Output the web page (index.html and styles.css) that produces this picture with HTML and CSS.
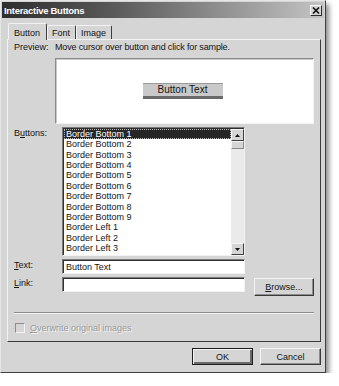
FILE: index.html
```html
<!DOCTYPE html>
<html lang="en">
  <head>
    <meta charset="UTF-8" />
    <meta name="viewport" content="width=device-width, initial-scale=1.0" />
    <link rel="stylesheet" href="styles.css">
    <title>Interactive Buttons</title>
  </head>
  <body>
    <div class="vindue">
      <div class="titel">
        <span>Interactive Buttons</span>
        <span class="luk">
          <svg width="8" height="7" viewBox="0 0 8 7"><path d="M1 0.5 L7 6.5 M7 0.5 L1 6.5" stroke="#111" stroke-width="1.6"/></svg>
        </span>
      </div>

      <nav class="faner">
        <span class="fane valgt">Button</span>
        <span class="fane">Font</span>
        <span class="fane">Image</span>
      </nav>

      <section class="panel">
        <div class="raekke">
          <span class="etiket kort">Preview:</span>
          <span class="info">Move cursor over button and click for sample.</span>
        </div>
        <div class="preview">
          <span class="eksempel">Button Text</span>
        </div>

        <div class="raekke top">
          <span class="etiket">B<u>u</u>ttons:</span>
          <div class="liste">
            <ul>
              <li class="valgt">Border Bottom 1</li>
              <li>Border Bottom 2</li>
              <li>Border Bottom 3</li>
              <li>Border Bottom 4</li>
              <li>Border Bottom 5</li>
              <li>Border Bottom 6</li>
              <li>Border Bottom 7</li>
              <li>Border Bottom 8</li>
              <li>Border Bottom 9</li>
              <li>Border Left 1</li>
              <li>Border Left 2</li>
              <li>Border Left 3</li>
            </ul>
            <div class="rulle">
              <span class="pil"><svg width="5" height="3" viewBox="0 0 5 3"><path d="M0 3 L2.5 0 L5 3 Z" fill="#111"/></svg></span>
              <span class="greb"></span>
              <span class="spor"></span>
              <span class="pil"><svg width="5" height="3" viewBox="0 0 5 3"><path d="M0 0 L2.5 3 L5 0 Z" fill="#111"/></svg></span>
            </div>
          </div>
        </div>

        <div class="raekke felt">
          <span class="etiket"><u>T</u>ext:</span>
          <span class="input">Button Text</span>
        </div>
        <div class="raekke felt">
          <span class="etiket"><u>L</u>ink:</span>
          <span class="input"></span>
          <button class="knap browse"><u>B</u>rowse...</button>
        </div>

        <hr />

        <label class="check">
          <span class="boks"></span>
          <span><u>O</u>verwrite original images</span>
        </label>
      </section>

      <footer class="knapper">
        <button class="knap standard">OK</button>
        <button class="knap">Cancel</button>
      </footer>
    </div>
  </body>
</html>
```

FILE: styles.css
```css
* {
  margin: 0;
  padding: 0;
  box-sizing: border-box;
}

body {
  background-color: white;
  font-family: "Liberation Sans", Arial, sans-serif;
  font-size: 9px;
  color: #141414;
}

u {
  text-decoration: underline;
}

.vindue {
  width: 326px;
  height: 373px;
  background-color: #d5d5d5;
  border: 1px solid;
  border-color: #e6e6e6 #404040 #404040 #e6e6e6;
  box-shadow: 3px 4px 5px rgba(0, 0, 0, 0.45);
  padding: 1px;
}

.titel {
  height: 16px;
  background: linear-gradient(to right, #2e2e2e, #5a5a5a 35%, #c4c4c4);
  color: white;
  font-weight: bold;
  font-size: 9.5px;
  letter-spacing: -0.3px;
  display: flex;
  align-items: center;
  justify-content: space-between;
  padding: 0 2px 0 2px;
}

.luk {
  width: 12px;
  height: 11px;
  background-color: #d5d5d5;
  border: 1px solid;
  border-color: #f4f4f4 #303030 #303030 #f4f4f4;
  display: flex;
  align-items: center;
  justify-content: center;
}

.faner {
  display: flex;
  align-items: flex-end;
  height: 20px;
  padding-left: 6px;
  margin-top: 1px;
}

.fane {
  height: 14px;
  padding: 2px 5px 0 4px;
  border: 1px solid;
  border-bottom: none;
  border-color: #f2f2f2 #3c3c3c #3c3c3c #f2f2f2;
  border-radius: 2px 2px 0 0;
}

.fane.valgt {
  height: 17px;
  padding: 4px 6px 0 5px;
  position: relative;
  top: 1px;
  background-color: #d5d5d5;
  z-index: 1;
}

.panel {
  margin-left: 5px;
  width: 314px;
  height: 303px;
  border: 1px solid;
  border-color: #f2f2f2 #3c3c3c #3c3c3c #f2f2f2;
  padding: 1px 6px 0 6px;
}

.raekke {
  display: flex;
  align-items: center;
}

.raekke.top {
  align-items: flex-start;
  margin-top: 3px;
}

.info {
  letter-spacing: -0.15px;
}

.etiket {
  width: 48px;
  flex-shrink: 0;
  padding-top: 1px;
}

.etiket.kort {
  width: 41px;
}

.preview {
  margin: 6px 0 0 41px;
  width: 259px;
  height: 66px;
  background-color: white;
  border: 1px solid;
  border-color: #8c8c8c #f4f4f4 #f4f4f4 #8c8c8c;
  box-shadow: inset 1px 1px 0 #c8c8c8;
  display: flex;
  align-items: center;
  justify-content: center;
  padding-right: 4px;
}

.eksempel {
  width: 80px;
  height: 16px;
  background-color: #c9c9c9;
  border-top: 1px solid #9a9a9a;
  border-bottom: 3px solid #6a6a6a;
  font-size: 10px;
  text-align: center;
  line-height: 12px;
}

.liste {
  width: 183px;
  height: 129px;
  display: flex;
  border: 1px solid;
  border-color: #7a7a7a #f2f2f2 #f2f2f2 #7a7a7a;
  box-shadow: inset 1px 1px 0 #303030;
  background-color: white;
  overflow: hidden;
  padding: 1px 0 0 1px;
}

.liste ul {
  list-style: none;
  flex: 1;
  overflow: hidden;
}

.liste li {
  height: 10.36px;
  line-height: 10.36px;
  padding-left: 2px;
  white-space: nowrap;
}

.liste li.valgt {
  background-color: #262626;
  color: white;
  outline: 1px dotted #bdbdbd;
  outline-offset: -1px;
}

.rulle {
  width: 13px;
  display: flex;
  flex-direction: column;
  background-color: #eaeaea;
}

.pil {
  height: 12px;
  background-color: #d5d5d5;
  border: 1px solid;
  border-color: #f4f4f4 #404040 #404040 #f4f4f4;
  display: flex;
  align-items: center;
  justify-content: center;
}

.greb {
  height: 8px;
  background-color: #d5d5d5;
  border: 1px solid;
  border-color: #f4f4f4 #8a8a8a #8a8a8a #f4f4f4;
}

.spor {
  flex: 1;
}

.felt {
  margin-top: 3px;
  align-items: flex-start;
}

.input {
  width: 183px;
  height: 15px;
  background-color: white;
  border: 1px solid;
  border-color: #7a7a7a #f2f2f2 #f2f2f2 #7a7a7a;
  box-shadow: inset 1px 1px 0 #303030;
  padding: 1px 0 0 3px;
  line-height: 12px;
}

.knap {
  font-family: "Liberation Sans", Arial, sans-serif;
  font-size: 9px;
  color: #141414;
  background-color: #d5d5d5;
  border: 1px solid;
  border-color: #f4f4f4 #3a3a3a #3a3a3a #f4f4f4;
  box-shadow: inset -1px -1px 0 #8c8c8c;
}

.browse {
  width: 60px;
  height: 18px;
  margin: 1px 0 0 9px;
}

hr {
  border: none;
  border-top: 1px solid #8c8c8c;
  border-bottom: 1px solid #f4f4f4;
  margin-top: 16px;
  width: 300px;
}

.check {
  display: flex;
  align-items: center;
  gap: 5px;
  margin-top: 9px;
  margin-left: 1px;
  color: #9a9a9a;
  text-shadow: 1px 1px 0 #f2f2f2;
}

.boks {
  width: 10px;
  height: 10px;
  border: 1px solid;
  border-color: #8c8c8c #f4f4f4 #f4f4f4 #8c8c8c;
  background-color: #d5d5d5;
}

.knapper {
  display: flex;
  justify-content: flex-end;
  gap: 7px;
  padding: 6px 3px 0 0;
}

.knapper .knap {
  width: 61px;
  height: 17px;
}

.knap.standard {
  border-color: #1e1e1e;
  box-shadow: inset 1px 1px 0 #f4f4f4, inset -2px -2px 0 #6a6a6a;
}
```
